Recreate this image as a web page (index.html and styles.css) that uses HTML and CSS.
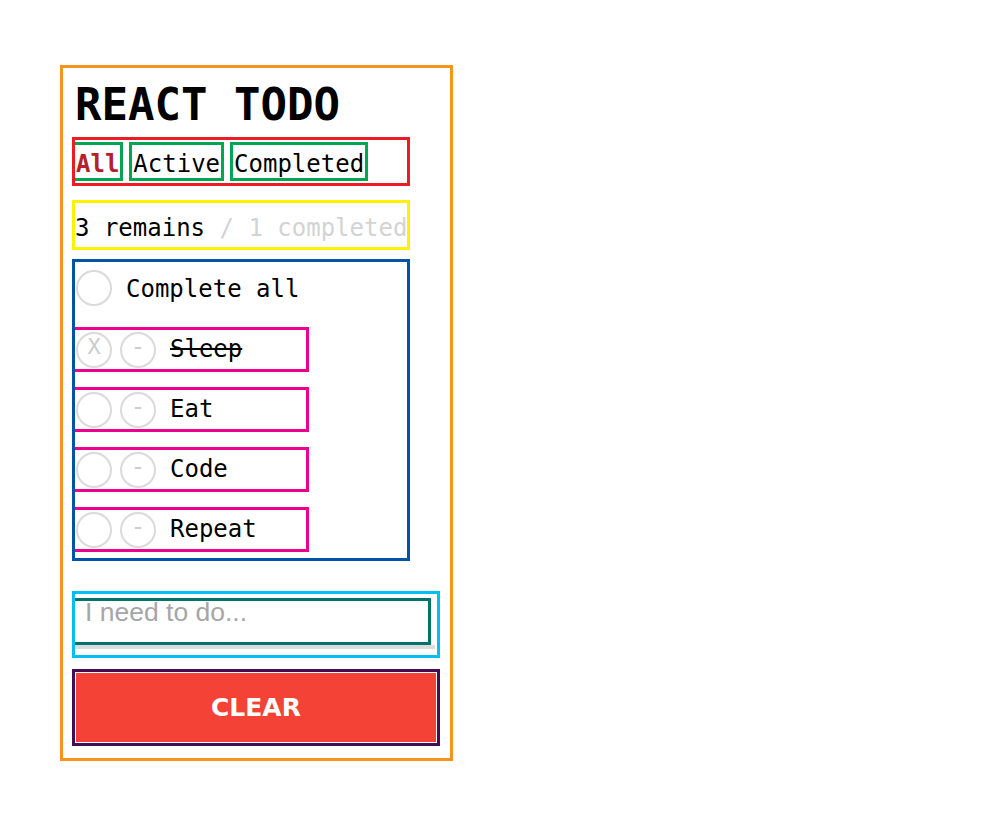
FILE: index.html
```html
<!DOCTYPE html>
<html>
<head>
<meta charset="utf-8">
<title>React Todo</title>
<link rel="stylesheet" href="styles.css">
</head>
<body>
<div class="app">
  <h1 class="title">REACT TODO</h1>
  <div class="filters">
    <span class="filter active">All</span>
    <span class="filter">Active</span>
    <span class="filter">Completed</span>
  </div>
  <div class="stats">3 remains <span class="muted">/ 1 completed</span></div>
  <div class="list">
    <div class="complete-all">
      <span class="circle"></span>
      <span class="label">Complete all</span>
    </div>
    <div class="item done">
      <span class="circle mark">X</span>
      <span class="circle dash">-</span>
      <span class="text">Sleep</span>
    </div>
    <div class="item">
      <span class="circle mark"></span>
      <span class="circle dash">-</span>
      <span class="text">Eat</span>
    </div>
    <div class="item">
      <span class="circle mark"></span>
      <span class="circle dash">-</span>
      <span class="text">Code</span>
    </div>
    <div class="item">
      <span class="circle mark"></span>
      <span class="circle dash">-</span>
      <span class="text">Repeat</span>
    </div>
  </div>
  <div class="input-wrap">
    <input class="new-todo" type="text" placeholder="I need to do...">
    <div class="input-line"></div>
  </div>
  <button class="clear">CLEAR</button>
</div>
</body>
</html>
```

FILE: styles.css
```css
html, body {
  margin: 0;
  padding: 0;
  background: #fff;
}

body {
  font-family: "DejaVu Sans Mono", monospace;
  color: #000;
  padding: 68px 0 40px 63px;
}

.app {
  box-sizing: border-box;
  width: 387px;
  padding: 11px 13px 15px 12px;
  outline: 3px solid #f7941d;
}

.title {
  margin: 0 0 9px 0;
  font-size: 44px;
  line-height: 52px;
  font-weight: bold;
  white-space: nowrap;
}

.filters {
  width: 332px;
  box-sizing: border-box;
  padding: 5px 0;
  display: flex;
  gap: 12px;
  outline: 3px solid #ed1c24;
  margin-bottom: 20px;
}

.filter {
  font-size: 24px;
  line-height: 28px;
  padding: 5px 1px 0;
  outline: 3px solid #00a651;
}

.filter.active {
  color: #b5202a;
  font-weight: bold;
}

.stats {
  width: 332px;
  box-sizing: border-box;
  padding: 11px 0 5px;
  font-size: 24px;
  line-height: 28px;
  white-space: nowrap;
  outline: 3px solid #fff200;
  margin-bottom: 15px;
}

.muted {
  color: #d3d3d3;
}

.list {
  width: 332px;
  box-sizing: border-box;
  padding: 8px 0 9px;
  outline: 3px solid #0054a6;
  margin-bottom: 36px;
  display: flex;
  flex-direction: column;
  gap: 21px;
}

.complete-all {
  display: flex;
  align-items: center;
  height: 36px;
  font-size: 24px;
  margin-bottom: 3px;
}

.circle {
  box-sizing: border-box;
  width: 36px;
  height: 36px;
  border: 2px solid #dadada;
  border-radius: 50%;
  display: flex;
  align-items: center;
  justify-content: center;
  padding-bottom: 6px;
  margin-left: 1px;
  color: #cccccc;
  font-size: 24px;
  line-height: 28px;
  flex: none;
}

.label {
  margin-left: 14px;
  padding-top: 2px;
}

.item {
  width: 231px;
  height: 39px;
  box-sizing: border-box;
  display: flex;
  align-items: center;
  outline: 3px solid #ec008c;
  font-size: 24px;
}

.item .dash {
  margin-left: 8px;
}

.item .mark {
  font-size: 22px;
}

.item .text {
  margin-left: 14px;
  padding-bottom: 2px;
}

.item.done .text {
  text-decoration: line-through;
}

.input-wrap {
  box-sizing: border-box;
  width: 362px;
  padding: 7px 0 6px;
  outline: 3px solid #00bff3;
  margin-bottom: 17px;
}

.new-todo {
  display: block;
  box-sizing: border-box;
  width: 353px;
  height: 41px;
  margin: 0;
  border: none;
  padding: 0 8px 18px 10px;
  font-family: "Liberation Sans", Arial, sans-serif;
  font-size: 26.5px;
  outline: 3px solid #00746b;
  background: #fff;
}

.new-todo::placeholder {
  color: #a6a6a6;
}

.input-line {
  width: 360px;
  height: 4px;
  margin-top: 3px;
  background: #dcdcdc;
}

.clear {
  display: block;
  box-sizing: border-box;
  width: 362px;
  height: 71px;
  margin: 0;
  border: 1px solid #fff;
  background: #f44336;
  color: #fff;
  font-family: "DejaVu Sans", sans-serif;
  font-weight: bold;
  font-size: 25px;
  outline: 3px solid #440e52;
  padding: 0;
}
```
